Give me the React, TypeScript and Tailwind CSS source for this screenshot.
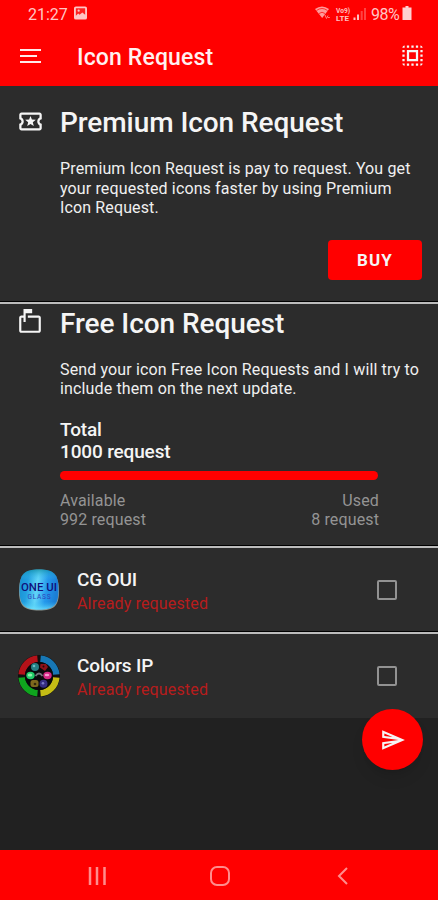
import { MdOutlineLocalActivity, MdOutlineMarkunreadMailbox, MdOutlineSend, MdSelectAll } from 'react-icons/md';

const apps = [
    { id: 'cgoui', name: 'CG OUI', status: 'Already requested', icon: <GlassIcon /> },
    { id: 'colorsip', name: 'Colors IP', status: 'Already requested', icon: <ColorsIcon /> },
];

function GlassIcon() {
    return (
        <svg viewBox="0 0 42 42" className="h-[42px] w-[42px]">
            <defs>
                <linearGradient id="glass" x1="0" y1="0" x2="1" y2="0.15">
                    <stop offset="0" stopColor="#168fd0" />
                    <stop offset="0.25" stopColor="#239fe0" />
                    <stop offset="0.5" stopColor="#62d5f8" />
                    <stop offset="0.75" stopColor="#2498ec" />
                    <stop offset="1" stopColor="#1b7fd6" />
                </linearGradient>
                <linearGradient id="shine" x1="0" y1="0" x2="0" y2="1">
                    <stop offset="0" stopColor="#0d8aa0" stopOpacity="0.7" />
                    <stop offset="0.25" stopColor="#3cc0f0" stopOpacity="0" />
                    <stop offset="0.8" stopColor="#3cc0f0" stopOpacity="0" />
                    <stop offset="1" stopColor="#6fe4ff" stopOpacity="0.8" />
                </linearGradient>
            </defs>
            <path d="M21 2C36 2 41 7 41 22S36 41.500 21 41.500 1 37 1 22 6 2 21 2Z" fill="#8f9a94" />
            <path d="M21 .5C36 .5 40.500 5 40.500 20.500S36 40.500 21 40.500 1.500 36 1.500 20.500 6 .5 21 .5Z" fill="url(#glass)" />
            <path d="M21 .5C36 .5 40.500 5 40.500 20.500S36 40.500 21 40.500 1.500 36 1.500 20.500 6 .5 21 .5Z" fill="url(#shine)" />
            <text x="21" y="22" textAnchor="middle" textLength="36" lengthAdjust="spacingAndGlyphs" fontSize="10" fontWeight="500" fill="#11107c">ONE UI</text>
            <text x="21" y="30" textAnchor="middle" textLength="23" fontSize="6.500" fill="#3040b8">GLASS</text>
        </svg>
    );
}

function ColorsIcon() {
    return (
        <svg viewBox="0 0 42 42" className="h-[42px] w-[42px]">
            <circle cx="21" cy="21" r="21" fill="#101010" />
            <g fill="none" strokeWidth="6.500">
                <path d="M3.700 19.500A17.400 17.400 0 0 1 19.500 3.700" stroke="#b51219" />
                <path d="M22.500 3.700A17.400 17.400 0 0 1 38.300 19.500" stroke="#1777b5" />
                <path d="M38.300 22.500A17.400 17.400 0 0 1 22.500 38.300" stroke="#c5bd15" />
                <path d="M19.500 38.300A17.400 17.400 0 0 1 3.700 22.500" stroke="#0fa51e" />
            </g>
            <circle cx="21" cy="21" r="14" fill="#08090b" />
            <circle cx="17" cy="12" r="4" fill="#277e83" />
            <circle cx="16" cy="11" r="1.300" fill="#67c1c4" />
            <path d="M22.500 9h5.500l2 3-3 4-5-3.500Z" fill="#8c1118" />
            <circle cx="25.500" cy="11.500" r="1" fill="#20090a" />
            <ellipse cx="12.500" cy="20.500" rx="4.200" ry="3.700" fill="#20cc68" />
            <ellipse cx="12" cy="20" rx="2.300" ry="1.500" fill="#91efab" />
            <path d="M17.500 21q3.500-5 7 0" fill="none" stroke="#71717b" strokeWidth="1.800" />
            <ellipse cx="29.500" cy="20.500" rx="4.200" ry="3.700" fill="#d32783" />
            <ellipse cx="29" cy="20" rx="2.300" ry="1.300" fill="#f49bce" />
            <rect x="12.500" y="25" width="8" height="7" rx="2.500" fill="#7d681e" />
            <circle cx="17" cy="29" r="1.300" fill="#30270c" />
            <circle cx="25.500" cy="28.700" r="4" fill="#352c82" />
            <circle cx="25" cy="28.200" r="1.300" fill="#777ac5" />
        </svg>
    );
}

function StatusIcons() {
    return (
        <svg viewBox="0 0 54 16" className="h-4 w-[54px] overflow-visible" fill="#ffc0c0">
            <path d="M-2 3Q5 -2 12 3L5.200 12Z" opacity="0.8" />
            <path d="M-.5 4.500Q5 .5 10.500 4.500M2 7.500Q5 5 8 7.500" fill="none" stroke="#ff3030" strokeWidth="1" />
            <path d="M8 9l1.500 3.500 1.500-3M10.800 11.500h2" stroke="#ff8080" fill="none" />
            <g fontSize="7" fontWeight="700">
                <text x="19" y="7" textLength="14" lengthAdjust="spacingAndGlyphs">Vo9)</text>
                <text x="19" y="14.500" textLength="13" lengthAdjust="spacingAndGlyphs">LTE</text>
            </g>
            <path d="M36.500 11.500h2v2.500h-2zM40 8.500h2v5.500h-2z" />
            <path d="M43.700 5h2v9h-2zM47 2h2v12h-2z" opacity="0.35" />
        </svg>
    );
}

function Divider() {
    return <div className="h-[3px] shrink-0 border-t border-black bg-[#bcbcbc]" />;
}

export default function App() {
    return (
        <div className="relative flex h-[900px] w-[438px] flex-col overflow-hidden bg-[#212121] font-['Roboto',sans-serif] text-[#f5f5f5]">
            <header className="h-[86px] shrink-0 bg-[#ff0000]">
                <div className="flex h-7 items-center pr-[26px] pl-7 text-base leading-none text-[#ffc5c5]">
                    <span className="w-[39px] pt-px whitespace-nowrap">21:27</span>
                    <svg viewBox="0 0 14 14" className="mb-0.5 ml-[7px] h-[14px] w-[13px]">
                        <rect width="14" height="14" rx="2" fill="#ffc5c5" />
                        <path d="M2 2h10v7L9 6.500 6 9 4.500 7.500 2 10Z" fill="#ff2020" />
                        <circle cx="5" cy="4.500" r="1.200" fill="#ffc5c5" />
                    </svg>
                    <div className="ml-auto flex items-center">
                        <StatusIcons />
                        <span className="w-[31px] pt-px tracking-[-0.5px]">98%</span>
                        <svg viewBox="0 0 9 14" className="mb-0.5 h-[14px] w-[10px]" fill="#ffd0d0">
                            <path d="M3 0h3v1.500h3V14H0V1.500h3Z" />
                        </svg>
                    </div>
                </div>
                <div className="flex h-[58px] items-center pr-3 pl-5">
                    <svg viewBox="0 0 21 16" className="mb-[3px] h-4 w-[21px]" stroke="#ffeaea" strokeWidth="2">
                        <path d="M0 2h21M0 8h17M0 14h21" />
                    </svg>
                    <h1 className="ml-9 pt-0.5 text-[23px] font-medium tracking-[0.15px] text-[#fff0f0]">Icon Request</h1>
                    <MdSelectAll className="mb-1 ml-auto h-[27px] w-[27px]" />
                </div>
            </header>

            <section className="flex h-[215px] shrink-0 bg-[#2c2c2c] pl-[17px]">
                <MdOutlineLocalActivity className="mt-[22px] h-[27px] w-[27px]" />
                <div className="ml-4 flex flex-1 flex-col pt-[19px] pr-4">
                    <h2 className="text-[28px] leading-9 font-medium tracking-[-0.07px]">Premium Icon Request</h2>
                    <p className="mt-[18px] text-base leading-[19.500px] tracking-[0.13px] whitespace-nowrap text-[#f0f0f0]">
                        Premium Icon Request is pay to request. You get<br />
                        your requested icons faster by using Premium<br />
                        Icon Request.
                    </p>
                    <button className="mt-[22.500px] h-10 w-[94px] self-end rounded-[4px] bg-[#ff0000] pt-0.5 text-[17px] font-bold tracking-[1.1px]">BUY</button>
                </div>
            </section>
            <Divider />

            <section className="flex h-[241px] shrink-0 bg-[#2c2c2c] pl-[17px]">
                <MdOutlineMarkunreadMailbox className="mt-[5px] h-[26px] w-[26px]" />
                <div className="ml-[17px] flex-1 pt-0.5">
                    <h2 className="text-[28px] leading-9 font-medium tracking-[-0.07px]">Free Icon Request</h2>
                    <p className="mt-[18px] text-base leading-[19px] tracking-[0.14px] whitespace-nowrap text-[#f0f0f0]">
                        Send your icon Free Icon Requests and I will try to<br />
                        include them on the next update.
                    </p>
                    <div className="mt-[21px] text-[19px] leading-[22px] font-medium tracking-[-0.15px]">
                        <div>Total</div>
                        <div>1000 request</div>
                    </div>
                    <div className="mt-2 h-[9px] w-[318px] rounded-full bg-[#ff0000]" />
                    <div className="mt-[11px] flex w-[319px] justify-between text-base leading-[19px] tracking-[0.13px] text-[#949494]">
                        <div>
                            <div>Available</div>
                            <div>992 request</div>
                        </div>
                        <div className="text-right">
                            <div>Used</div>
                            <div>8 request</div>
                        </div>
                    </div>
                </div>
            </section>

            {apps.map((app) => (
                <div key={app.id}>
                    <Divider />
                    <div className="flex h-[83px] items-center bg-[#2c2c2c] pl-[18px]">
                        {app.icon}
                        <div className="ml-[17px] pt-[5px]">
                            <div className="text-[19px] leading-6 font-medium tracking-[-0.15px]">{app.name}</div>
                            <div className="text-base leading-6 tracking-[0.15px] text-[#b71c1c]">{app.status}</div>
                        </div>
                        <div className="mr-[41px] ml-auto h-5 w-5 rounded-[2px] border-2 border-[#929292]" />
                    </div>
                </div>
            ))}
            <div className="h-px bg-[#2c2c2c]" />

            <button className="absolute top-[709px] left-[362px] flex h-[61px] w-[61px] items-center justify-center rounded-full bg-[#ff0000] shadow-lg">
                <MdOutlineSend className="h-[26px] w-[26px]" />
            </button>

            <nav className="mt-auto flex h-[50px] shrink-0 items-center bg-[#ff0000] pt-0.5 pl-[88px]">
                <svg viewBox="0 0 262 20" className="h-5 w-[262px]" fill="none" stroke="#ff8c8c" strokeWidth="2">
                    <path d="M2 1v18M9 1v18M16.500 1v18" strokeWidth="2.500" />
                    <rect x="123" y="1" width="18" height="18" rx="6" />
                    <path d="M259 2l-8 8 8 8" />
                </svg>
            </nav>
        </div>
    );
}
